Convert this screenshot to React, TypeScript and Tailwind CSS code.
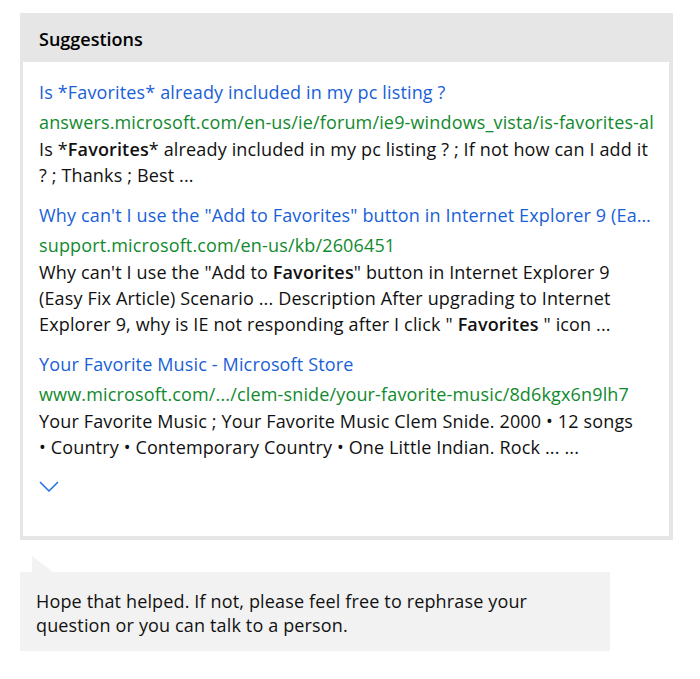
import React from 'react';

interface Suggestion {
  title: string;
  url: string;
  snippet: React.ReactNode;
}

const SUGGESTIONS: Suggestion[] = [
  {
    title: 'Is *Favorites* already included in my pc listing ?',
    url: 'answers.microsoft.com/en-us/ie/forum/ie9-windows_vista/is-favorites-already-included-in-my-pc-listing',
    snippet: (
      <>
        Is *<b className="font-semibold">Favorites</b>* already included in my pc listing ? ; If not how can I add it ? ; Thanks ; Best ...
      </>
    ),
  },
  {
    title: 'Why can\'t I use the "Add to Favorites" button in Internet Explorer 9 (Easy Fix Article)',
    url: 'support.microsoft.com/en-us/kb/2606451',
    snippet: (
      <>
        Why can't I use the "Add to <b className="font-semibold">Favorites</b>" button in Internet Explorer 9 (Easy Fix Article) Scenario ... Description After upgrading to Internet Explorer 9, why is IE not responding after I click " <b className="font-semibold">Favorites</b> " icon ...
      </>
    ),
  },
  {
    title: 'Your Favorite Music - Microsoft Store',
    url: 'www.microsoft.com/.../clem-snide/your-favorite-music/8d6kgx6n9lh7',
    snippet: (
      <>
        Your Favorite Music ; Your Favorite Music Clem Snide. 2000 •{'\u00a0'}12 songs •{'\u00a0'}Country •{'\u00a0'}Contemporary Country •{'\u00a0'}One Little Indian. Rock ... ...
      </>
    ),
  },
];

export default function App() {
  return (
    <div
      className="min-h-screen bg-white pl-[20px] pr-[27px] pt-[13px] text-[18px] tracking-[0.15px] text-[#111]"
      style={{ fontFamily: '"Open Sans", "Noto Sans", sans-serif' }}
    >
      {/* suggestions card */}
      <div className="bg-[#e6e6e6] px-[3px] pb-[4px] pr-[4px]">
        <div className="h-[49px] pl-[16px] pt-[13px] text-[18px] font-semibold leading-[26px] tracking-normal text-black">
          Suggestions
        </div>
        <div className="bg-white px-[16px] pt-[17px] pb-[44px]">
          <div className="flex flex-col gap-[14px]">
            {SUGGESTIONS.map((s, i) => (
              <div key={i} className="flex flex-col">
                <div className="mb-[4px] truncate leading-[26px] text-[#1a5fd8]">{s.title}</div>
                <div className="mb-[1px] overflow-hidden whitespace-nowrap leading-[26px] text-[#118a2e]">{s.url}</div>
                <div className="leading-[26px]">{s.snippet}</div>
              </div>
            ))}
          </div>
          <div className="mt-[21px]">
            <svg width="20" height="11" viewBox="0 0 20 11" fill="none">
              <polyline points="1,1 10,10 19,1" stroke="#1f6fe0" strokeWidth="1.5" />
            </svg>
          </div>
        </div>
      </div>

      {/* bot reply bubble */}
      <div className="relative mt-[32px] w-[590px] bg-[#f2f2f2] pl-[16px] pr-[16px] pt-[17px] pb-[14px] leading-[24px]">
        <svg className="absolute left-[12px] top-[-16px]" width="21" height="16" viewBox="0 0 21 16">
          <polygon points="0,0 21,16 0,16" fill="#f2f2f2" />
        </svg>
        Hope that helped. If not, please feel free to rephrase your question or you can talk to a person.
      </div>
    </div>
  );
}
